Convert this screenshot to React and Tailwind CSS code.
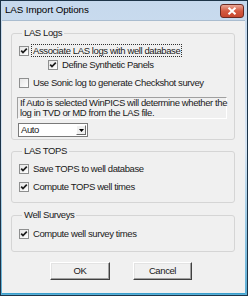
import React from "react";

function Check({ checked = true }) {
  return (
    <span className="inline-flex items-center justify-center w-[10px] h-[10px] border border-[#8e8f8f] bg-gradient-to-br from-[#e6e6e6] to-[#ffffff] shrink-0">
      {checked && (
        <svg width="8" height="8" viewBox="0 0 8 8">
          <path d="M1.2 3.6 L3 5.6 L6.8 1.6" stroke="#1c1c1c" strokeWidth="1.7" fill="none" />
        </svg>
      )}
    </span>
  );
}

function Row({ children, checked = true, focus = false, cls = "" }) {
  return (
    <div className={`flex items-center h-[13px] ${cls}`}>
      <Check checked={checked} />
      <span className={`ml-[2px] px-[1px] leading-[11px] whitespace-nowrap ${focus ? "border border-dotted border-[#303030]" : "border border-transparent"}`}>
        {children}
      </span>
    </div>
  );
}

function Group({ title, children, cls = "" }) {
  return (
    <fieldset className={`border border-[#d5d5d5] rounded-[3px] ml-[9px] w-[224px] px-[7px] ${cls}`}>
      <legend className="px-[2px] ml-[3px] leading-[12px] text-[#1a1a1a]">{title}</legend>
      {children}
    </fieldset>
  );
}

function Button({ children, cls = "" }) {
  return (
    <div className={`h-[18px] flex items-center justify-center bg-[#f0f0f0] border border-t-[#ffffff] border-l-[#ffffff] border-b-[#404040] border-r-[#404040] shadow-[inset_-1px_-1px_0_#a0a0a0,inset_1px_1px_0_#e3e3e3] ${cls}`}>
      {children}
    </div>
  );
}

export default function App() {
  return (
    <div className="w-[248px] h-[296px] bg-gradient-to-b from-[#c6d9ed] via-[#d6e4f2] to-[#58aed6] border border-[#1d3448] flex flex-col font-['Liberation_Sans',Arial,sans-serif] text-[9.5px] tracking-[-0.4px] text-[#1a1a1a]">
      <div className="h-[19px] shrink-0 flex items-center pl-[4px] relative">
        <span className="text-[9.8px] tracking-[-0.1px] text-black">LAS Import Options</span>
        <div className="absolute right-[3px] top-[3px] w-[24px] h-[14px] rounded-[3px] border border-[#6b2a22] bg-gradient-to-b from-[#e9a797] via-[#d45a41] to-[#c7472e] flex items-center justify-center">
          <svg width="10" height="8" viewBox="0 0 10 8">
            <path d="M1.5 0.8 L8.5 7.2 M8.5 0.8 L1.5 7.2" stroke="#ffffff" strokeWidth="2" />
          </svg>
        </div>
      </div>
      <div className="h-[274px] shrink-0 ml-[1px] mr-[2px] bg-[#f0f0f0] border-t border-t-[#a9bccf] border-b border-b-[#3a9fcd] flex flex-col pt-[6px]">
        <Group title="LAS Logs" cls="pb-[2px]">
          <Row focus cls="mt-[5px]">Associate LAS logs with well database</Row>
          <Row cls="mt-[1px] ml-[29px]">Define Synthetic Panels</Row>
          <Row checked={false} cls="mt-[5px]">Use Sonic log to generate Checkshot survey</Row>
          <div className="mt-[8px] -ml-[2px] w-[210px] border border-t-[#a0a0a0] border-l-[#a0a0a0] border-b-white border-r-white px-[2px] leading-[10px] whitespace-nowrap">
            If Auto is selected WinPICS will determine whether the<br />log in TVD or MD from the LAS file.
          </div>
          <div className="mt-[4px] -ml-[1px] w-[70px] h-[14px] bg-white border border-[#7a7a7a] flex items-center">
            <span className="flex-1 pl-[2px]">Auto</span>
            <div className="w-[10px] h-[10px] mr-[1px] bg-[#f0f0f0] border border-t-white border-l-white border-b-[#6a6a6a] border-r-[#6a6a6a] flex items-center justify-center">
              <svg width="5" height="3" viewBox="0 0 5 3"><path d="M0 0 H5 L2.5 3 Z" fill="#000" /></svg>
            </div>
          </div>
        </Group>
        <Group title="LAS TOPS" cls="mt-[5px] pb-[9px]">
          <Row cls="mt-[5px]">Save TOPS to well database</Row>
          <Row cls="mt-[5px]">Compute TOPS well times</Row>
        </Group>
        <Group title="Well Surveys" cls="mt-[6px] pb-[11px]">
          <Row cls="mt-[6px]">Compute well survey times</Row>
        </Group>
        <div className="flex mt-[10px] pl-[48px]">
          <Button cls="w-[60px]">OK</Button>
          <Button cls="w-[59px] ml-[23px]">Cancel</Button>
        </div>
      </div>
    </div>
  );
}
